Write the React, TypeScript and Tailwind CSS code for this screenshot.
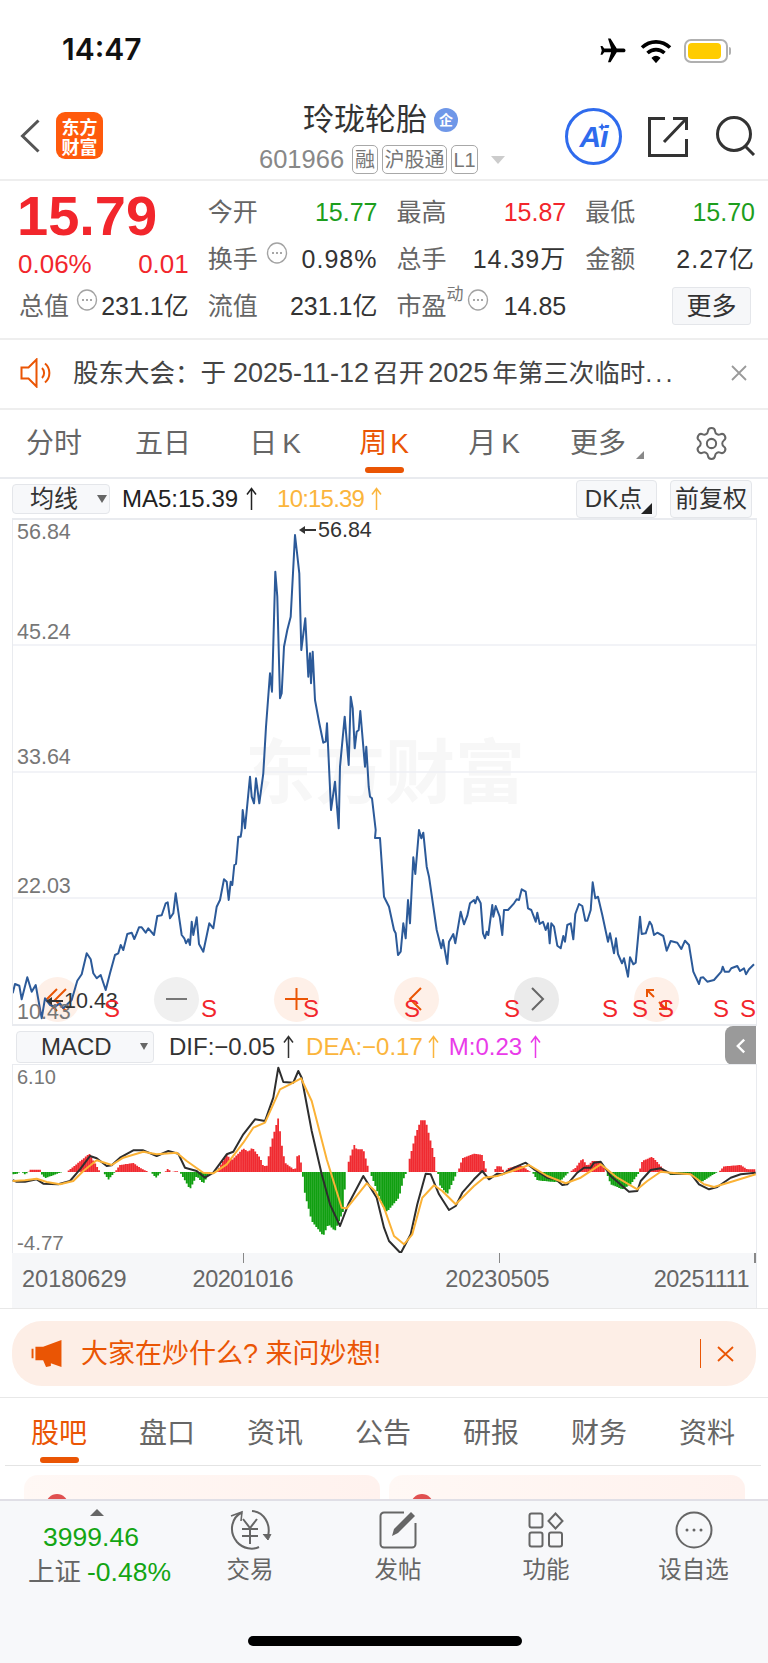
import React from "react";
import { Settings } from "lucide-react";

type Pt = [number, number];

// Weekly close, sketched in three runs on chart-local grids
const closeA: Pt[] = [[38,1060],[45,1032],[58,1037],[65,1078],[82,1012],[95,1055],[107,1035],[125,1135],[135,1075],[150,1095],[165,1100],[180,1090],[190,1105],[215,1080],[232,1022],[245,1003],[260,940],[272,958],[280,1000],[290,1015],[302,1005],[317,1050],[330,1000],[345,945],[355,940],[362,915],[370,930],[382,882],[395,878],[403,897],[410,880],[417,862],[425,862],[437,878],[445,865],[462,885],[472,828],[485,826],[497,790],[503,787],[510,835],[520,820],[527,760],[535,815],[545,885],[553,895],[558,910],[565,898],[570,915],[575,845],[580,885],[590,832],[597,912],[610,935],[628,850],[640,865],[650,800],[660,780],[672,718],[680,725],[686,780],[692,725],[697,735],[703,675],[708,672],[715,590],[722,590]];
const closeB: Pt[] = [[35,960],[38,900],[45,955],[60,800],[65,860],[72,880],[78,805],[88,880],[100,790],[108,650],[120,490],[126,545],[136,185],[142,260],[150,565],[155,550],[162,410],[172,360],[182,320],[195,75],[200,120],[208,190],[214,420],[226,325],[235,500],[240,430],[243,520],[248,425],[255,570],[268,640],[280,698],[287,695],[291,640],[303,900],[315,815],[326,955],[330,770],[344,620],[356,765],[362,560],[368,595],[374,715],[380,665],[386,660],[391,603],[405,770],[409,710],[416,830],[420,860],[426,865],[437,960]];
const closeC: Pt[] = [[0,350],[15,380],[30,450],[35,460],[42,525],[50,515],[58,430],[65,475],[72,360],[78,430],[88,232],[94,282],[105,150],[112,175],[118,158],[128,260],[135,290],[158,450],[172,505],[177,480],[190,552],[195,485],[208,462],[214,490],[230,395],[240,433],[250,407],[258,370],[270,360],[274,370],[280,350],[290,370],[297,460],[303,475],[308,455],[313,465],[325,375],[328,410],[335,378],[347,410],[355,465],[360,390],[372,390],[390,370],[398,358],[405,360],[413,328],[425,335],[432,385],[442,390],[455,425],[460,398],[467,432],[477,425],[485,450],[492,430],[497,490],[502,430],[510,440],[520,497],[530,505],[538,468],[543,485],[550,435],[560,430],[568,478],[574,402],[585,372],[595,378],[604,422],[610,422],[620,390],[626,307],[634,355],[642,350],[655,405],[672,485],[678,460],[690,520],[696,475],[702,522],[714,550],[720,535],[732,590],[738,532],[748,553],[755,548],[768,410],[773,462],[785,460],[797,425],[803,435],[810,465],[820,458],[838,468],[848,512],[860,483],[880,488],[892,507],[903,482],[915,495],[928,575],[945,612],[950,593],[958,592],[970,605],[990,600],[1012,575],[1016,560],[1022,575],[1035,575],[1042,565],[1060,558],[1068,573],[1080,565],[1086,583],[1095,568],[1110,553]];

const closeLine: Pt[] = [
  ...closeA.map(([x, y]): Pt => [x / 3, 640 + y / 3]),
  ...closeB.map(([x, y]): Pt => [230 + x / 3, 510 + y / 3]),
  [375, 838], [380, 838],
  ...closeC.map(([x, y]): Pt => [384 + x / 3, 780 + y / 3]),
];

const left = (p: Pt[]) => p.map(([x, y]): Pt => [x / 3, 1020 + y / 3]);
const right = (p: Pt[]) => p.map(([x, y]): Pt => [384 + x / 3, 1020 + y / 3]);

const difLine: Pt[] = [
  ...left([[38,478],[50,482],[75,482],[110,475],[130,488],[175,490],[210,480],[240,445],[270,405],[290,412],[320,435],[335,433],[360,410],[400,388],[430,388],[470,405],[505,390],[535,398],[555,440],[590,450],[615,470],[640,455],[680,400],[700,392],[730,340],[765,295],[795,300],[820,230],[835,140],[850,183],[880,185],[895,150],[905,170],[935,330],[965,460],[990,550],[1020,615],[1045,550],[1090,465],[1130,530],[1152,620]]),
  ...right([[15,660],[50,697],[80,640],[100,550],[125,458],[140,460],[165,520],[195,567],[215,555],[235,515],[270,475],[295,450],[315,475],[340,458],[355,460],[390,440],[425,425],[450,445],[490,470],[515,475],[535,492],[550,490],[580,455],[600,440],[620,440],[630,425],[650,422],[680,465],[735,512],[760,510],[770,480],[800,447],[830,442],[860,458],[920,458],[945,490],[975,505],[1000,498],[1040,470],[1070,460],[1115,455]]),
];
const deaLine: Pt[] = [
  ...left([[38,480],[75,478],[110,473],[140,483],[180,490],[220,480],[250,450],[290,418],[335,432],[370,410],[430,392],[470,400],[530,395],[560,420],[610,455],[640,457],[680,430],[730,365],[760,320],[795,305],[840,205],[870,190],[903,172],[935,240],[980,415],[1025,560],[1040,562],[1100,487],[1125,510],[1152,560]]),
  ...right([[30,645],[60,670],[85,640],[115,530],[150,493],[175,510],[215,550],[270,495],[300,470],[340,465],[385,450],[435,432],[490,465],[545,487],[590,470],[650,430],[700,470],[760,505],[790,480],[830,452],[860,455],[920,460],[960,490],[990,498],[1050,480],[1115,460]]),
];

// Histogram outlines: each run is interpolated into weekly bars
const redRuns: Pt[][] = [
  ...[
    [[85,453],[90,446],[120,446],[125,453]],
    [[200,453],[235,425],[268,398],[290,435],[300,453]],
    [[345,453],[360,432],[400,426],[420,440],[445,453]],
    [[495,453],[505,442],[512,453]],
    [[515,453],[530,450],[535,453]],
    [[650,453],[680,400],[695,418],[730,382],[745,392],[757,380],[780,410],[790,435],[800,435],[815,360],[835,290],[845,370],[855,425],[885,448],[892,403],[900,403],[907,453]],
    [[1042,453],[1045,425],[1062,370],[1070,385],[1090,385],[1108,453]],
  ].map((r) => left(r as Pt[])),
  ...[
    [[72,453],[75,420],[95,340],[110,298],[125,298],[135,340],[150,400],[157,453]],
    [[222,453],[235,412],[270,398],[295,402],[308,453]],
    [[328,453],[340,435],[355,437],[358,453]],
    [[365,453],[370,442],[410,432],[440,453]],
    [[557,453],[575,440],[595,412],[610,435],[625,420],[650,420],[665,453]],
    [[765,453],[775,420],[805,407],[830,435],[845,453]],
    [[1005,453],[1020,436],[1070,432],[1090,445],[1115,445]],
  ].map((r) => right(r as Pt[])),
];
const greenRuns: Pt[][] = [
  ...[
    [[38,453],[40,460],[55,458],[58,453]],
    [[65,453],[75,460],[85,453]],
    [[120,453],[135,472],[180,455],[190,453]],
    [[310,453],[325,476],[345,453]],
    [[452,453],[468,470],[485,453]],
    [[540,453],[570,505],[590,465],[610,488],[630,453]],
    [[907,453],[915,520],[935,600],[970,645],[985,610],[1005,630],[1030,570],[1038,453]],
    [[1110,453],[1152,565],[1162,572],[1197,530],[1212,470],[1220,453]],
  ].map((r) => left(r as Pt[])),
  ...[
    [[162,453],[165,490],[190,520],[220,453]],
    [[445,453],[460,478],[510,483],[530,480],[555,453]],
    [[667,453],[680,490],[715,505],[740,490],[767,453]],
    [[852,453],[860,462],[920,458],[950,485],[1000,453]],
  ].map((r) => right(r as Pt[])),
];

const toPath = (pts: Pt[]) => pts.map(([x, y], i) => `${i ? "L" : "M"}${x.toFixed(1)} ${y.toFixed(1)}`).join("");

const barsPath = (runs: Pt[][]) => {
  const zero = 1171;
  const step = 1.905;
  let d = "";
  for (const run of runs) {
    for (let i = 0; i < run.length - 1; i++) {
      const [x0, y0] = run[i];
      const [x1, y1] = run[i + 1];
      const first = Math.ceil(x0 / step);
      for (let n = first; n * step < x1; n++) {
        const x = n * step;
        const y = y0 + ((y1 - y0) * (x - x0)) / (x1 - x0 || 1);
        d += `M${x.toFixed(2)} ${zero}V${y.toFixed(1)}`;
      }
    }
  }
  return d;
};

const Dots = ({ className = "" }: { className?: string }) => (
  <svg viewBox="0 0 22 22" className={`h-[22px] w-[22px] ${className}`} fill="none">
    <ellipse cx="11" cy="11" rx="9.500" ry="10" stroke="#a3a3a3" strokeWidth="1.400" />
    <circle cx="7" cy="11" r="1" fill="#8a8a8a" />
    <circle cx="11" cy="11" r="1" fill="#8a8a8a" />
    <circle cx="15" cy="11" r="1" fill="#8a8a8a" />
  </svg>
);

// The tall thin arrow after each indicator value
const UpArrow = ({ className = "" }: { className?: string }) => (
  <svg viewBox="0 0 11 24" className={`inline-block h-[24px] w-[11px] ${className}`} fill="none" stroke="currentColor" strokeWidth="1.500">
    <path d="M5.500 23V2M1 7.500 5.500 1.500 10 7.500" />
  </svg>
);

const Pointer = () => (
  <svg viewBox="0 0 17 10" className="h-[10px] w-[17px]" fill="#333">
    <path d="M0 5 6 1v3h11v2H6v3z" />
  </svg>
);

const Label = ({ children }: { children: React.ReactNode }) => <span className="text-[#666]">{children}</span>;

const Stat = ({ name, value, tone = "text-[#333]", note }: { name: React.ReactNode; value: string; tone?: string; note?: React.ReactNode }) => (
  <div className="flex items-center justify-between">
    <div className="flex items-center">
      <Label>{name}</Label>
      {note}
    </div>
    <span className={tone}>{value}</span>
  </div>
);

const Tag = ({ children, w }: { children: React.ReactNode; w: string }) => (
  <span className={`flex h-[29px] items-center justify-center rounded-[5px] border border-[#a8a8a8] text-[20px] leading-none text-[#777] ${w}`}>{children}</span>
);

const RoundBtn = ({ x, fill, children }: { x: string; fill: string; children: React.ReactNode }) => (
  <div className={`absolute top-[457px] flex h-[45px] w-[45px] items-center justify-center rounded-full ${x} ${fill}`}>
    <svg viewBox="0 0 45 45" className="h-[45px] w-[45px]" fill="none" strokeWidth="2">{children}</svg>
  </div>
);

const Sell = ({ x }: { x: string }) => <span className={`absolute top-[474px] text-[24px] leading-[30px] text-[#f2262c] ${x}`}>S</span>;

const Axis = ({ top, children }: { top: string; children: string }) => (
  <span className={`absolute left-[4px] text-[21.500px] leading-[24px] text-[#777] ${top}`}>{children}</span>
);

const StockTab = ({ children, active }: { children: React.ReactNode; active?: boolean }) => (
  <div className={`relative flex h-full w-[108px] items-center justify-center pt-[4px] text-[28px] ${active ? "text-[#ea5504]" : "text-[#666]"}`}>
    {children}
    {active && <span className="absolute bottom-[2px] h-[6px] w-[39px] rounded-full bg-[#ea5504]" />}
  </div>
);

const BarItem = ({ label, children, w }: { label: string; children: React.ReactNode; w: string }) => (
  <div className={`-mt-[1px] flex flex-col items-center ${w}`}>
    <div className="flex h-[44px] items-center justify-center">{children}</div>
    <span className="mt-[4px] whitespace-nowrap text-[23.500px] leading-[28px] text-[#666]">{label}</span>
  </div>
);

export default function App() {
  return (
    <div className="h-[1663px] w-[768px] overflow-hidden bg-white font-['Liberation_Sans','Noto_Sans_CJK_SC',sans-serif]">
      {/* Status bar */}
      <div className="flex h-[96px] items-start justify-between pl-[62px] pr-[37px] pt-[32px]">
        <span className="font-['Inter'] text-[30px] font-semibold leading-[34px] text-[#111]">14:47</span>
        <div className="mt-[4px] flex items-center">
          <svg viewBox="0 0 24 24" className="h-[30px] w-[30px] rotate-90" fill="#000">
            <path d="M21 16v-2l-8-5V3.500c0-.83-.67-1.500-1.500-1.500S10 2.670 10 3.500V9l-8 5v2l8-2.500V19l-2 1.500V22l3.500-1 3.500 1v-1.500L13 19v-5.500l8 2.500z" />
          </svg>
          <svg viewBox="0 0 32 24" className="ml-[12px] h-[24px] w-[32px]" fill="none" stroke="#000" strokeWidth="3.600">
            <path d="M2 8.500C10 1 22 1 30 8.500" />
            <path d="M7.500 14c5-4.500 12-4.500 17 0" />
            <path d="M12.500 19c2-2 5-2 7 0l-3.500 4z" fill="#000" strokeWidth="1.500" />
          </svg>
          <div className="ml-[12px] flex h-[24px] w-[44px] items-center rounded-[7px] border-2 border-[#b0b0b0] p-[2px]">
            <div className="h-full w-[33px] rounded-[4px] bg-[#ffcc00]" />
          </div>
          <div className="ml-[1px] h-[8px] w-[2px] rounded-r bg-[#b0b0b0]" />
        </div>
      </div>

      {/* Navigation header */}
      <div className="flex h-[85px] items-start border-b-2 border-[#eeeeee]">
        <svg viewBox="0 0 20 34" className="ml-[20px] mt-[23px] h-[34px] w-[20px]" fill="none" stroke="#555" strokeWidth="3">
          <path d="M18.500 1.500 2.500 17l16 15.500" />
        </svg>
        <div className="ml-[16px] mt-[16px] flex h-[47px] w-[47px] flex-col items-center justify-center rounded-[9px] bg-[#ff5a0c] font-['Noto_Sans_CJK_SC'] text-[18px] font-bold leading-[20px] text-white">
          <span>东方</span>
          <span>财富</span>
        </div>
        <div className="ml-[156px] flex w-[270px] flex-col">
          <div className="mt-[6px] flex items-center pl-[44px]">
            <span className="text-[31px] leading-[36px] text-[#333]">玲珑轮胎</span>
            <span className="ml-[7px] flex h-[24px] w-[24px] items-center justify-center rounded-full bg-[#6f97e8] text-[14px] font-bold leading-none text-white">企</span>
          </div>
          <div className="mt-[7px] flex items-center">
            <span className="text-[25.500px] leading-[29px] text-[#888]">601966</span>
            <div className="ml-[8px] flex gap-[4px]">
              <Tag w="w-[26px]">融</Tag>
              <Tag w="w-[65px]">沪股通</Tag>
              <Tag w="w-[27px]">L1</Tag>
            </div>
            <span className="ml-[13px] h-0 w-0 border-x-[7px] border-t-[8px] border-x-transparent border-t-[#cccccc]" />
          </div>
        </div>
        <div className="relative ml-[36px] mt-[12px] flex h-[57px] w-[57px] items-center justify-center rounded-full border-[3px] border-[#2f6bed]">
          <span className="text-[30px] font-bold italic leading-none tracking-[-1px] text-[#2f6bed]">Ai</span>
          <svg viewBox="0 0 10 10" className="absolute right-[13px] top-[12px] h-[8px] w-[8px]" fill="#2f6bed">
            <path d="M5 0 6.500 3.500 10 5 6.500 6.500 5 10 3.500 6.500 0 5 3.500 3.500z" />
          </svg>
        </div>
        <svg viewBox="0 0 40 40" className="ml-[26px] mt-[21px] h-[40px] w-[40px]" fill="none" stroke="#333" strokeWidth="3">
          <path d="M17 1.500H1.500v37h37V22" />
          <path d="M16 25 38 2M25 1.500h13.500V13" />
        </svg>
        <svg viewBox="0 0 40 40" className="ml-[28px] mt-[20px] h-[40px] w-[40px]" fill="none" stroke="#333" strokeWidth="3">
          <circle cx="18" cy="18" r="16.500" />
          <path d="m29 30 9 9" />
        </svg>
      </div>

      {/* Quote summary */}
      <div className="grid h-[159px] grid-cols-4 grid-rows-[47px_47px_47px] gap-x-[19px] border-b-2 border-[#eeeeee] pl-[19px] pr-[13px] pt-[7px] text-[25px] leading-[30px]">
        <div className="flex items-center">
          <span className="-ml-[2px] mt-[8px] text-[56px] font-bold leading-none text-[#f2262c]">15.79</span>
        </div>
        <Stat name="今开" value="15.77" tone="text-[#1d9e1d]" />
        <Stat name="最高" value="15.87" tone="text-[#f2262c]" />
        <Stat name="最低" value="15.70" tone="text-[#1d9e1d]" />

        <div className="-ml-[1px] mt-[10px] flex items-center justify-between text-[26px] text-[#f2262c]">
          <span>0.06%</span>
          <span>0.01</span>
        </div>
        <Stat name="换手" value="0.98%" tone="text-[#333] tracking-[1px]" note={<Dots className="ml-[8px] -translate-y-[6px]" />} />
        <Stat name="总手" value="14.39万" tone="text-[#333] tracking-[1px]" />
        <Stat name="金额" value="2.27亿" tone="text-[#333] tracking-[1px]" />

        <div className="flex items-center justify-between">
          <div className="flex items-center">
            <Label>总值</Label>
            <Dots className="ml-[7px] -translate-y-[6px]" />
          </div>
          <span className="text-[#333]">231.1亿</span>
        </div>
        <Stat name="流值" value="231.1亿" />
        <Stat
          name="市盈"
          value="14.85"
          note={
            <>
              <span className="-translate-y-[11px] text-[17px] leading-none text-[#777]">动</span>
              <Dots className="ml-[3px] -translate-y-[6px]" />
            </>
          }
        />
        <div className="flex items-center justify-end pr-[4px]">
          <span className="flex h-[38px] w-[79px] items-center justify-center rounded-[3px] border border-[#e4e6ea] bg-[#f6f7f9] text-[#333]">更多</span>
        </div>
      </div>

      {/* Announcement strip */}
      <div className="flex h-[70px] items-center border-b-2 border-[#eeeeee] pb-[3px] pl-[20px] pr-[20px]">
        <svg viewBox="0 0 32 30" className="h-[30px] w-[32px]" fill="none" stroke="#ea5504" strokeWidth="2">
          <path d="M1.500 9.500h7l8-8v27l-8-8h-7z" />
          <path d="M22 10a7 7 0 0 1 0 10M25 5.500a12.500 12.500 0 0 1 0 19" />
        </svg>
        <span className="ml-[21px] w-[636px] whitespace-nowrap text-[25.500px] leading-[32px] text-[#444]">
          股东大会：于<span className="ml-[7px] mr-[4px] text-[27px]">2025-11-12</span>召开<span className="mx-[4px] text-[27px]">2025</span>年第三次临时<span className="tracking-[3px]">...</span>
        </span>
        <svg viewBox="0 0 16 16" className="ml-[22px] h-[16px] w-[16px]" fill="none" stroke="#9a9a9a" strokeWidth="1.800">
          <path d="m1 1 14 14M15 1 1 15" />
        </svg>
      </div>

      {/* Chart period tabs */}
      <div className="flex h-[69px] items-center border-b-2 border-[#e9ebef] text-[28px] text-[#666]">
        <div className="flex w-[108px] justify-center">分时</div>
        <div className="flex w-[110px] justify-center">五日</div>
        <div className="flex w-[110px] justify-center pl-[4px]">日<span className="ml-[5px]">K</span></div>
        <div className="relative flex h-full w-[110px] items-center justify-center pl-[2px] text-[#ea5504]">
          周<span className="ml-[3px]">K</span>
          <span className="absolute bottom-[4px] left-[37px] h-[6px] w-[39px] rounded-full bg-[#ea5504]" />
        </div>
        <div className="flex w-[110px] justify-center pl-[2px]">月<span className="ml-[5px]">K</span></div>
        <div className="relative flex w-[110px] justify-center pr-[10px]">
          更多
          <span className="absolute left-[88px] top-[28px] h-0 w-0 border-b-[8px] border-l-[8px] border-b-[#888] border-l-transparent" />
        </div>
        <div className="flex w-[110px] justify-center pr-[3px]">
          <Settings size={37} strokeWidth={1.300} color="#666" />
        </div>
      </div>

      {/* Moving-average toolbar */}
      <div className="flex h-[39px] items-center pl-[12px] pr-[16px] text-[24px] leading-[30px]">
        <div className="flex h-[30px] w-[98px] items-center rounded-[4px] border border-[#e4e6ea] bg-[#f7f8fa] pl-[17px] text-[#333]">
          均线
          <span className="ml-[19px] h-0 w-0 border-x-[5px] border-t-[8px] border-x-transparent border-t-[#666]" />
        </div>
        <span className="ml-[12px] flex items-center text-[#222]">MA5:15.39<UpArrow className="ml-[8px]" /></span>
        <span className="ml-[20px] flex items-center tracking-[-0.8px] text-[#fbb53c]">10:15.39<UpArrow className="ml-[7px]" /></span>
        <div className="relative ml-auto flex h-[38px] w-[81px] items-center justify-center rounded-[4px] border border-[#e4e6ea] bg-[#f7f8fa] pr-[6px] text-[#333]">
          DK点
          <span className="absolute bottom-[3px] right-[4px] h-0 w-0 border-b-[11px] border-l-[11px] border-b-[#222] border-l-transparent" />
        </div>
        <div className="ml-[13px] flex h-[38px] w-[82px] items-center justify-center rounded-[4px] border border-[#e4e6ea] bg-[#f7f8fa] text-[#333]">前复权</div>
      </div>

      {/* Price chart */}
      <div className="relative ml-[12px] h-[508px] w-[745px] overflow-hidden border-x border-y-2 border-[#e9ebef]">
        <span className="absolute left-[232px] top-[208px] font-['Noto_Sans_CJK_SC'] text-[70px] font-bold leading-[80px] text-[#f7f7f7]">东方财富</span>
        <RoundBtn x="left-[22px]" fill="bg-[#fef0e8]">
          <path d="M22 12 11 23l11 11M31 12 20 23l11 11" stroke="#ea5504" />
        </RoundBtn>
        <RoundBtn x="left-[141px]" fill="bg-[#f0f0f0]">
          <path d="M12 22h21" stroke="#777" />
        </RoundBtn>
        <RoundBtn x="left-[261px]" fill="bg-[#fef0e8]">
          <path d="M11 22h23M22.500 11v22" stroke="#ea5504" />
        </RoundBtn>
        <RoundBtn x="left-[381px]" fill="bg-[#fef0e8]">
          <path d="M27 11 16 22l11 11" stroke="#ea5504" />
        </RoundBtn>
        <RoundBtn x="left-[501px]" fill="bg-[#ebebeb]">
          <path d="M18 11 29 22 18 33" stroke="#666" />
        </RoundBtn>
        <RoundBtn x="left-[621px]" fill="bg-[#fef0e8]">
          <path d="M13 13l7 7M13 20v-7h7M32 32l-7-7M32 25v7h-7" stroke="#ea5504" />
        </RoundBtn>
        <svg viewBox="12 518 745 508" className="absolute -left-px -top-[2px] h-[508px] w-[745px]" fill="none">
          <path d="M12 645H757M12 772H757M12 898H757" stroke="#eef0f5" strokeWidth="1.500" />
          <path d={toPath(closeLine)} stroke="#2c5a99" strokeWidth="2" strokeLinejoin="round" />
        </svg>
        <Axis top="top-[0px]">56.84</Axis>
        <Axis top="top-[100px]">45.24</Axis>
        <Axis top="top-[225px]">33.64</Axis>
        <Axis top="top-[354px]">22.03</Axis>
        <Axis top="top-[480px]">10.43</Axis>
        <div className="absolute left-[286px] -top-[2px] flex items-center text-[21.500px] leading-[24px] text-[#333]">
          <Pointer />
          <span className="ml-[2px]">56.84</span>
        </div>
        <div className="absolute left-[33px] top-[469px] flex items-center text-[21.500px] leading-[24px] text-[#333]">
          <Pointer />
          <span className="ml-[1px]">10.43</span>
        </div>
        <Sell x="left-[91px]" />
        <Sell x="left-[188px]" />
        <Sell x="left-[290px]" />
        <Sell x="left-[391px]" />
        <Sell x="left-[491px]" />
        <Sell x="left-[589px]" />
        <Sell x="left-[619px]" />
        <Sell x="left-[645px]" />
        <Sell x="left-[700px]" />
        <Sell x="left-[727px]" />
      </div>

      {/* MACD toolbar */}
      <div className="relative flex h-[38px] items-center pl-[16px] pt-[3px] text-[24px] leading-[30px]">
        <div className="flex h-[32px] w-[138px] items-center rounded-[4px] border border-[#e4e6ea] bg-[#f7f8fa] pl-[24px] text-[#333]">
          MACD
          <span className="ml-[28px] h-0 w-0 border-x-[4px] border-t-[7px] border-x-transparent border-t-[#666]" />
        </div>
        <span className="ml-[15px] flex items-center text-[#333]">DIF:−0.05<UpArrow className="ml-[8px]" /></span>
        <span className="ml-[12px] flex items-center text-[#fbb53c]">DEA:−0.17<UpArrow className="ml-[5px]" /></span>
        <span className="ml-[10px] flex items-center text-[#e93be9]">M:0.23<UpArrow className="ml-[8px]" /></span>
        <div className="absolute left-[725px] top-0 flex h-[39px] w-[31px] items-center justify-center rounded-l-[8px] bg-[#9a9a9a]">
          <svg viewBox="0 0 12 20" className="h-[16px] w-[10px]" fill="none" stroke="#fff" strokeWidth="3">
            <path d="M10 2 2 10l8 8" />
          </svg>
        </div>
      </div>

      {/* MACD panel */}
      <div className="relative ml-[12px] h-[189px] w-[745px] border-x border-t border-[#e9ebef]">
        <svg viewBox="12 1064 745 189" className="absolute -left-px top-0 h-[189px] w-[745px]" fill="none">
          <path d={barsPath(redRuns)} stroke="#f02a30" strokeWidth="1.800" />
          <path d={barsPath(greenRuns)} stroke="#109f10" strokeWidth="1.800" />
          <path d={toPath(difLine)} stroke="#2e2e2e" strokeWidth="2" strokeLinejoin="round" />
          <path d={toPath(deaLine)} stroke="#fbb236" strokeWidth="2" strokeLinejoin="round" />
        </svg>
        <span className="absolute left-[4px] top-[0px] text-[20px] leading-[24px] text-[#777]">6.10</span>
        <span className="absolute left-[4px] top-[166px] text-[20.500px] leading-[24px] text-[#777]">-4.77</span>
      </div>

      {/* Date axis */}
      <div className="relative ml-[12px] h-[55px] w-[745px] border-r border-[#e9ebef] bg-[#f6f7f9] text-[23.500px] leading-[28px] text-[#666]">
        <span className="absolute left-[231px] top-0 h-[10px] w-px bg-[#888]" />
        <span className="absolute left-[487px] top-0 h-[10px] w-px bg-[#888]" />
        <span className="absolute left-[742px] top-0 h-[10px] w-[2px] bg-[#888]" />
        <div className="absolute top-[12px] flex w-full">
          <span className="ml-[10px]">20180629</span>
          <span className="ml-[66px] tracking-[-0.5px]">20201016</span>
          <span className="ml-[152px]">20230505</span>
          <span className="ml-[104px] tracking-[-0.5px]">20251111</span>
        </div>
      </div>

      {/* Prompt banner */}
      <div className="h-[90px] border-y border-[#e8e8e8] px-[12px] pt-[12px]">
        <div className="flex h-[65px] items-center rounded-[30px] bg-[#fdeee6] pl-[19px]">
          <svg viewBox="0 0 32 28" className="h-[27px] w-[32px]" fill="#ea5504">
            <path d="M0 9h2v10H0zM4 7h8L31 0v28L20 24v3l-5 1-3-7H4z" />
          </svg>
          <span className="ml-[18px] w-[611px] whitespace-nowrap text-[27px] leading-[32px] text-[#ea5504]">大家在炒什么? 来问妙想!</span>
          <span className="ml-[8px] h-[29px] w-px bg-[#ea5504]" />
          <svg viewBox="0 0 17 16" className="ml-[16px] h-[16px] w-[17px]" fill="none" stroke="#ea5504" strokeWidth="1.800">
            <path d="m1 1 15 14M16 1 1 15" />
          </svg>
        </div>
      </div>

      {/* Content tabs */}
      <div className="ml-[5px] mr-[7px] flex h-[68px] border-b border-[#e4e4e4]">
        <StockTab active>股吧</StockTab>
        <StockTab>盘口</StockTab>
        <StockTab>资讯</StockTab>
        <StockTab>公告</StockTab>
        <StockTab>研报</StockTab>
        <StockTab>财务</StockTab>
        <StockTab>资料</StockTab>
      </div>

      {/* Top of the post cards, cut off by the tab bar */}
      <div className="flex h-[33px] gap-[9px] overflow-hidden pl-[24px] pt-[9px]">
        {[0, 1].map((n) => (
          <div key={n} className="h-[60px] w-[356px] rounded-t-[14px] bg-gradient-to-r from-[#fff8f5] to-[#fff2ee] pl-[22px] pt-[19px]">
            <span className="block h-[22px] w-[22px] rounded-full bg-[#e05050]" />
          </div>
        ))}
      </div>

      {/* Bottom tab bar */}
      <div className="relative h-[164px] border-t-2 border-[#e0dfe6] bg-[#f7f8fa] pt-[8px]">
        <div className="flex items-start">
          <div className="ml-[28px] flex w-[150px] flex-col items-center">
            <span className="-ml-[12px] h-0 w-0 border-x-[7px] border-b-[7px] border-x-transparent border-b-[#666]" />
            <span className="-ml-[24px] mt-[6px] text-[26.500px] leading-[30px] text-[#13a513]">3999.46</span>
            <div className="mt-[5px] flex w-full items-center text-[26.500px] leading-[30px]">
              <span className="text-[#666]">上证</span>
              <span className="ml-[6px] text-[#13a513]">-0.48%</span>
            </div>
          </div>
          <BarItem label="交易" w="ml-[22px] w-[100px]">
            <svg viewBox="0 0 44 40" className="h-[40px] w-[44px]" fill="none" stroke="#666" strokeWidth="2">
              <path d="M14 2.500C4 7 0 21 9 32c6 7 16 8 22 5" />
              <path d="M3 6l11-4-1 9" strokeWidth="1.600" />
              <path d="M24 1c12 1 19 13 16 25" />
              <path d="m35 24 5 6 3-6" fill="#666" strokeWidth="1" />
              <path d="m15 9 7 9 7-9M14 19h16M14 26h16M22 18v16" strokeWidth="2" />
            </svg>
          </BarItem>
          <BarItem label="发帖" w="ml-[74px] w-[48px]">
            <svg viewBox="0 0 38 38" className="h-[38px] w-[38px]" fill="none" stroke="#666" strokeWidth="2">
              <path d="M25 1.500H5a3.500 3.500 0 0 0-3.500 3.500v28A3.500 3.500 0 0 0 5 36.500h28a3.500 3.500 0 0 0 3.500-3.500V12" />
              <path d="m13 25 2-7L32 1l4 4-17 17z" fill="#666" stroke="none" />
            </svg>
          </BarItem>
          <BarItem label="功能" w="ml-[100px] w-[48px]">
            <svg viewBox="0 0 36 36" className="h-[36px] w-[36px]" fill="none" stroke="#666" strokeWidth="2">
              <rect x="1.500" y="1.500" width="13" height="14" rx="2" />
              <rect x="1.500" y="20.500" width="13" height="14" rx="2" />
              <rect x="21" y="20.500" width="13" height="14" rx="2" />
              <path d="m27.500 1.500 7 7.500-7 7.500-7-7.500z" />
            </svg>
          </BarItem>
          <BarItem label="设自选" w="ml-[88px] w-[71px]">
            <svg viewBox="0 0 38 38" className="h-[38px] w-[38px]" fill="none" stroke="#666" strokeWidth="2">
              <circle cx="19" cy="19" r="17.500" />
              <circle cx="12" cy="19" r="1.500" fill="#666" stroke="none" />
              <circle cx="19" cy="19" r="1.500" fill="#666" stroke="none" />
              <circle cx="26" cy="19" r="1.500" fill="#666" stroke="none" />
            </svg>
          </BarItem>
        </div>
        <div className="absolute left-[248px] top-[135px] h-[10px] w-[274px] rounded-full bg-black" />
      </div>
    </div>
  );
}
